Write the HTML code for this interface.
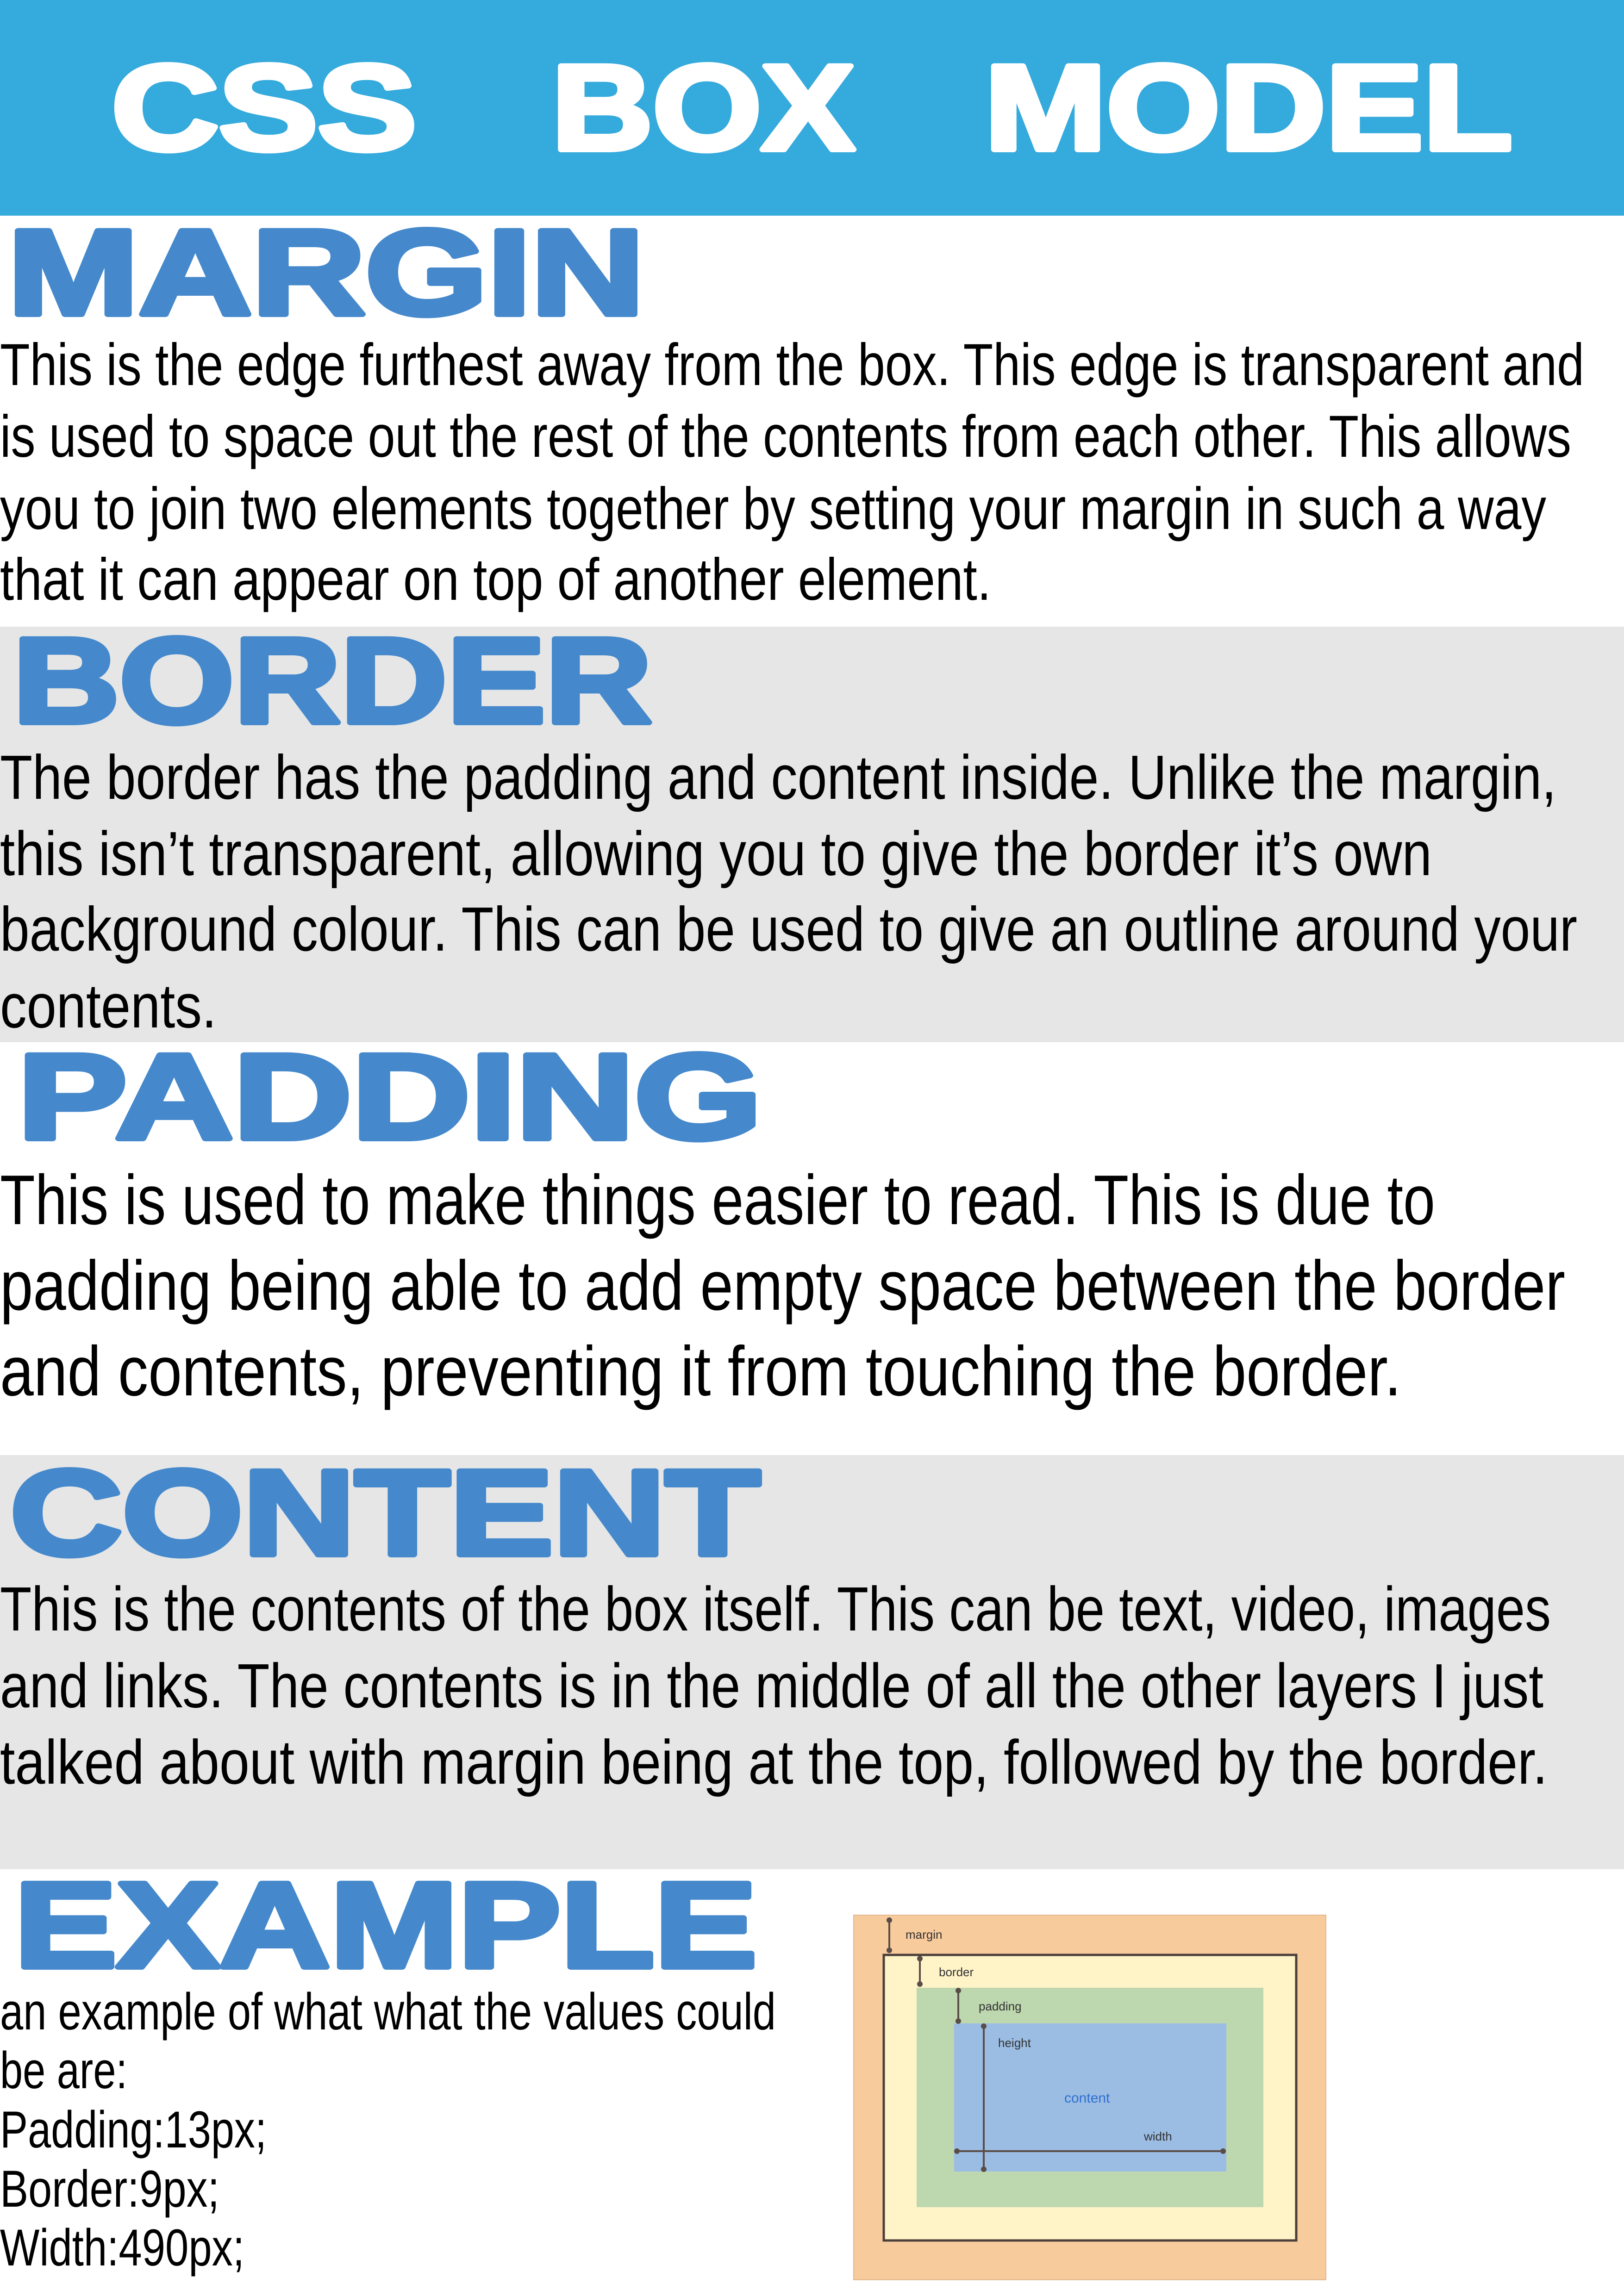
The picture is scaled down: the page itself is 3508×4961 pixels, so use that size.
<!DOCTYPE html>
<html><head><meta charset="utf-8"><style>
html,body{margin:0;padding:0;background:#fff}
svg{display:block}
.h{font-family:"Liberation Sans",sans-serif;font-weight:bold;fill:#4589cc;stroke:#4589cc;stroke-width:12;stroke-linejoin:round}
.w{font-family:"Liberation Sans",sans-serif;font-weight:bold;fill:#fff;stroke:#fff;stroke-width:12;stroke-linejoin:round}
.t{font-family:"Liberation Sans Narrow","Liberation Sans",sans-serif;fill:#000}
.s{font-family:"Liberation Sans",sans-serif;fill:#333}
</style></head><body>
<svg width="3508" height="4961" viewBox="0 0 3508 4961" xmlns="http://www.w3.org/2000/svg">
<rect x="0" y="0" width="3508" height="4961" fill="#fff"/>
<rect x="0" y="0" width="3508" height="466" fill="#35aadc"/>
<rect x="0" y="1354" width="3508" height="898" fill="#e6e6e6"/>
<rect x="0" y="3144" width="3508" height="895" fill="#e6e6e6"/>

<text class="w" x="241" y="323" font-size="262" textLength="659" lengthAdjust="spacingAndGlyphs">CSS</text>
<text class="w" x="1192" y="323" font-size="262" textLength="654" lengthAdjust="spacingAndGlyphs">BOX</text>
<text class="w" x="2127" y="323" font-size="262" textLength="1140" lengthAdjust="spacingAndGlyphs">MODEL</text>

<text class="h" x="17" y="679" font-size="262" textLength="1375" lengthAdjust="spacingAndGlyphs">MARGIN</text>
<g class="t" font-size="128">
<text x="0" y="832" textLength="3422" lengthAdjust="spacingAndGlyphs">This is the edge furthest away from the box. This edge is transparent and</text>
<text x="0" y="987" textLength="3394" lengthAdjust="spacingAndGlyphs">is used to space out the rest of the contents from each other. This allows</text>
<text x="0" y="1143" textLength="3340" lengthAdjust="spacingAndGlyphs">you to join two elements together by setting your margin in such a way</text>
<text x="0" y="1296" textLength="2141" lengthAdjust="spacingAndGlyphs">that it can appear on top of another element.</text>
</g>

<text class="h" x="28" y="1561" font-size="262" textLength="1380" lengthAdjust="spacingAndGlyphs">BORDER</text>
<g class="t" font-size="135">
<text x="0" y="1726" textLength="3362" lengthAdjust="spacingAndGlyphs">The border has the padding and content inside. Unlike the margin,</text>
<text x="0" y="1891" textLength="3093" lengthAdjust="spacingAndGlyphs">this isn’t transparent, allowing you to give the border it’s own</text>
<text x="0" y="2054" textLength="3407" lengthAdjust="spacingAndGlyphs">background colour. This can be used to give an outline around your</text>
<text x="0" y="2220" textLength="468" lengthAdjust="spacingAndGlyphs">contents.</text>
</g>

<text class="h" x="38" y="2460" font-size="262" textLength="1608" lengthAdjust="spacingAndGlyphs">PADDING</text>
<g class="t" font-size="152">
<text x="0" y="2645" textLength="3100" lengthAdjust="spacingAndGlyphs">This is used to make things easier to read. This is due to</text>
<text x="0" y="2830" textLength="3381" lengthAdjust="spacingAndGlyphs">padding being able to add empty space between the border</text>
<text x="0" y="3015" textLength="3027" lengthAdjust="spacingAndGlyphs">and contents, preventing it from touching the border.</text>
</g>

<text class="h" x="22" y="3359" font-size="262" textLength="1620" lengthAdjust="spacingAndGlyphs">CONTENT</text>
<g class="t" font-size="135">
<text x="0" y="3523" textLength="3350" lengthAdjust="spacingAndGlyphs">This is the contents of the box itself. This can be text, video, images</text>
<text x="0" y="3689" textLength="3334" lengthAdjust="spacingAndGlyphs">and links. The contents is in the middle of all the other layers I just</text>
<text x="0" y="3854" textLength="3343" lengthAdjust="spacingAndGlyphs">talked about with margin being at the top, followed by the border.</text>
</g>

<text class="h" x="31" y="4250" font-size="262" textLength="1604" lengthAdjust="spacingAndGlyphs">EXAMPLE</text>
<g class="t" font-size="112">
<text x="0" y="4385" textLength="1676" lengthAdjust="spacingAndGlyphs">an example of what what the values could</text>
<text x="0" y="4512" textLength="275" lengthAdjust="spacingAndGlyphs">be are:</text>
<text x="0" y="4640" textLength="576" lengthAdjust="spacingAndGlyphs">Padding:13px;</text>
<text x="0" y="4768" textLength="474" lengthAdjust="spacingAndGlyphs">Border:9px;</text>
<text x="0" y="4895" textLength="528" lengthAdjust="spacingAndGlyphs">Width:490px;</text>
</g>

<rect x="1844" y="4138" width="1020" height="788" fill="#f8cb9c" stroke="#e0b890" stroke-width="2"/>
<rect x="1909" y="4224" width="891" height="617" fill="#fff3c8" stroke="#4a3f3a" stroke-width="5"/>
<rect x="1980" y="4295" width="749" height="474" fill="#bdd7ae"/>
<rect x="2061" y="4372" width="588" height="320" fill="#9bbde3"/>
<g stroke="#5a4d47" stroke-width="4" fill="#5a4d47">
<line x1="1921" y1="4149" x2="1921" y2="4214"/>
<line x1="1987" y1="4232" x2="1987" y2="4287"/>
<line x1="2070" y1="4301" x2="2070" y2="4367"/>
<line x1="2125" y1="4378" x2="2125" y2="4687"/>
<line x1="2067" y1="4648" x2="2642" y2="4648"/>
<circle cx="1921" cy="4149" r="4"/><circle cx="1921" cy="4214" r="4"/>
<circle cx="1987" cy="4232" r="4"/><circle cx="1987" cy="4287" r="4"/>
<circle cx="2070" cy="4301" r="4"/><circle cx="2070" cy="4367" r="4"/>
<circle cx="2125" cy="4378" r="4"/><circle cx="2125" cy="4687" r="4"/>
<circle cx="2067" cy="4648" r="4"/><circle cx="2642" cy="4648" r="4"/>
</g>
<g class="s" font-size="26">
<text x="1956" y="4189">margin</text>
<text x="2028" y="4270">border</text>
<text x="2114" y="4344">padding</text>
<text x="2156" y="4423">height</text>
<text x="2471" y="4625">width</text>
</g>
<text x="2299" y="4543" font-size="30" style="font-family:'Liberation Sans',sans-serif;fill:#2f6fd0">content</text>
</svg>
</body></html>
